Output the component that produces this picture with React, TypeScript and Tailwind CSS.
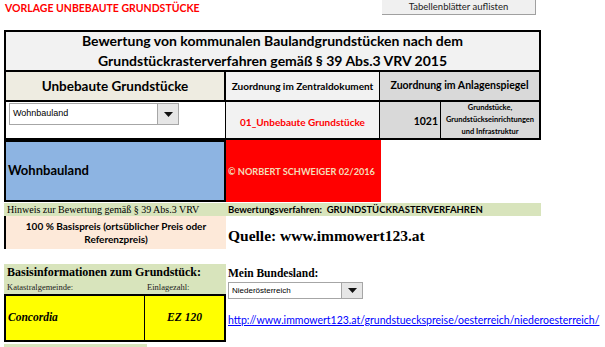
const serif = "font-['Liberation_Serif',serif]";

function Select({ value, width, text }: { value: string; width: string; text: string }) {
  return (
    <div className={`flex h-[22px] items-stretch border border-[#a6a6a6] bg-white ${width}`}>
      <div className={`flex flex-1 items-center pl-[3px] font-['Liberation_Sans',sans-serif] text-black ${text}`}>{value}</div>
      <div className="flex w-[21px] items-center justify-center border-l border-[#a6a6a6] bg-[#e6e6e6]">
        <svg width="9" height="5" viewBox="0 0 9 5"><path d="M0 0h9L4.5 5z" fill="#111" /></svg>
      </div>
    </div>
  );
}

export default function App() {
  return (
    <div className="h-[347px] w-[605px] overflow-hidden bg-white font-['Lato',sans-serif] text-black">
      {/* top line */}
      <div className="flex h-[30px] w-[541px] items-start">
        <div className="pl-[5px] pt-[1px] text-[10.5px] font-bold text-[#ff0000]">VORLAGE UNBEBAUTE GRUNDSTÜCKE</div>
        <button className="ml-auto mr-[5px] h-[15px] w-[154px] border-b border-r border-[#a0a0a0] bg-[#f0f0f0] text-[9.5px] leading-[14px] text-[#222]">
          Tabellenblätter auflisten
        </button>
      </div>

      {/* main header box */}
      <div className="ml-[4px] w-[537px] border-2 border-black">
        <div className="flex h-[40px] flex-col items-center justify-center border-b-2 border-black bg-[#f2f2f2] text-[14px] font-bold leading-[20px]">
          <div>Bewertung von kommunalen Baulandgrundstücken nach dem</div>
          <div>Grundstückrasterverfahren gemäß § 39 Abs.3 VRV 2015</div>
        </div>
        <div className="grid h-[30px] grid-cols-[220px_154px_1fr] border-b-2 border-black text-center font-bold">
          <div className="flex items-center justify-center border-r-2 border-black bg-[#eeece1] text-[13.5px]">Unbebaute Grundstücke</div>
          <div className="flex items-center justify-center border-r border-black bg-[#f2f2f2] text-[10px]">Zuordnung im Zentraldokument</div>
          <div className="flex items-center justify-center bg-[#d9d9d9] text-[10.5px]">Zuordnung im Anlagenspiegel</div>
        </div>
        <div className="grid h-[36px] grid-cols-[220px_154px_1fr]">
          <div className="border-r border-black bg-white pl-[3px] pt-[1px]">
            <Select value="Wohnbauland" width="w-[170px]" text="text-[9px]" />
          </div>
          <div className="flex items-center justify-center border-r border-black bg-[#f2f2f2] pt-[4px] text-[10px] font-bold text-[#ff0000]">
            01_Unbebaute Grundstücke
          </div>
          <div className="grid grid-cols-[61px_1fr] bg-[#d9d9d9]">
            <div className="flex items-center justify-end border-r border-black pr-[2px] pt-[4px] text-[10.5px] font-bold">1021</div>
            <div className="flex flex-col items-center justify-center text-[7.5px] font-bold leading-[12px]">
              <div>Grundstücke,</div>
              <div>Grundstückseinrichtungen</div>
              <div>und Infrastruktur</div>
            </div>
          </div>
        </div>
      </div>

      {/* Wohnbauland row */}
      <div className="ml-[4px] flex h-[62px]">
        <div className="flex w-[222px] items-center border-2 border-black bg-[#8db4e2] pl-[2px] text-[13px] font-bold">Wohnbauland</div>
        <div className="flex w-[155px] items-center whitespace-nowrap bg-[#ff0000] pl-[2px] pt-[2px] text-[9.2px] font-bold text-[#f4dcb8]">
          © NORBERT SCHWEIGER 02/2016
        </div>
      </div>

      {/* hint row */}
      <div className="ml-[4px] mt-[1px] flex h-[13px] w-[537px] items-center bg-[#d8e4bc]">
        <div className={`w-[222px] pl-[3px] text-[10px] leading-[13px] ${serif}`}>Hinweis zur Bewertung gemäß § 39 Abs.3 VRV</div>
        <div className="pl-[2px] text-[9.5px] font-bold leading-[13px]">Bewertungsverfahren:&nbsp; GRUNDSTÜCKRASTERVERFAHREN</div>
      </div>

      <div className="ml-[4px] flex h-[33px]">
        <div className="flex w-[222px] flex-col items-center justify-center border-l-2 border-black bg-[#fde9d9] text-[10px] font-bold leading-[13px]">
          <div>100 % Basispreis (ortsüblicher Preis oder</div>
          <div>Referenzpreis)</div>
        </div>
        <div className={`pl-[2px] pt-[10px] text-[15.5px] font-bold leading-[20px] ${serif}`}>Quelle: www.immowert123.at</div>
      </div>

      {/* base info */}
      <div className="ml-[4px] mt-[15px] flex">
        <div className="w-[222px]">
          <div className="h-[30px] bg-[#d8e4bc]">
            <div className={`pl-[3px] pt-[1px] text-[12px] font-bold leading-[15px] ${serif}`}>Basisinformationen zum Grundstück:</div>
            <div className={`flex pt-[1px] text-[8.5px] leading-[12px] text-[#222] ${serif}`}>
              <div className="w-[143px] pl-[3px]">Katastralgemeinde:</div>
              <div>Einlagezahl:</div>
            </div>
          </div>
          <div className={`grid h-[48px] grid-cols-[139px_1fr] border-2 border-black bg-[#ffff00] text-[11.5px] font-bold italic ${serif}`}>
            <div className="flex items-center border-r border-black pl-[2px]">Concordia</div>
            <div className="flex items-center justify-center">EZ 120</div>
          </div>
          <div className="mt-[2px] h-[10px] w-[143px] bg-[#d8e4bc]" />
        </div>
        <div className="pl-[2px]">
          <div className={`pt-[2px] text-[11.5px] font-bold leading-[15px] ${serif}`}>Mein Bundesland:</div>
          <div className="mt-[1px]">
            <Select value="Niederösterreich" width="w-[135px] !h-[17px]" text="text-[8px]" />
          </div>
          <a href="#" className="mt-[14px] block whitespace-nowrap text-[10.5px] leading-[14px] text-[#0000ff] underline">
            http://www.immowert123.at/grundstueckspreise/oesterreich/niederoesterreich/
          </a>
        </div>
      </div>
    </div>
  );
}
